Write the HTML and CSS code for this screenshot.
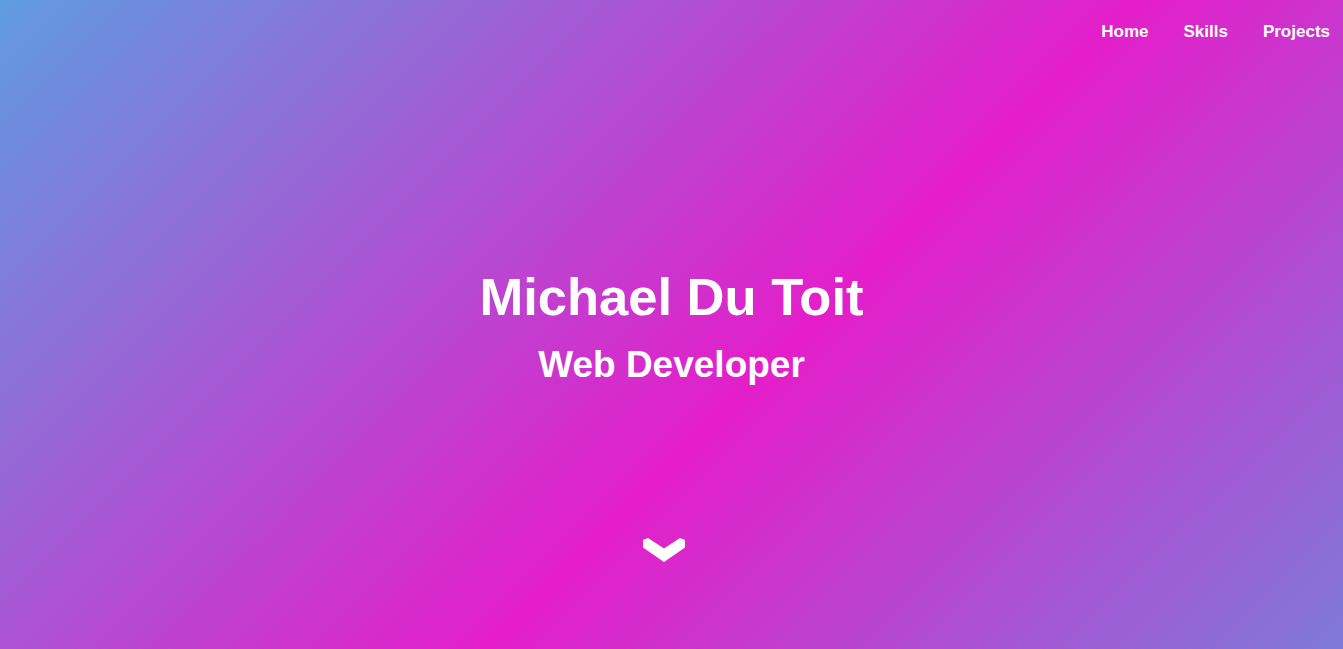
FILE: index.html
```html
<!DOCTYPE html>
<html lang="en">
<head>
<meta charset="utf-8">
<title>Michael Du Toit</title>
<link rel="stylesheet" href="styles.css">
</head>
<body>
<div class="hero">
  <header class="topbar">
    <nav class="nav">
      <a class="nav-link" href="#">Home</a>
      <a class="nav-link" href="#">Skills</a>
      <a class="nav-link" href="#">Projects</a>
    </nav>
  </header>
  <main class="intro">
    <h1 class="name">Michael Du Toit</h1>
    <h2 class="role">Web Developer</h2>
  </main>
  <div class="scroll">
    <svg class="chevron" width="42" height="25" viewBox="0 0 42 25" aria-hidden="true">
      <polygon points="0,2 5,0 21,10.5 37,0 42,2 42,9.5 21,24 0,9.5" fill="#fff"/>
    </svg>
  </div>
</div>
</body>
</html>
```
FILE: styles.css
```css
html, body {
  margin: 0;
  padding: 0;
}
body {
  font-family: "Liberation Sans", Arial, sans-serif;
  color: #fff;
}
.hero {
  height: 100vh;
  min-height: 649px;
  display: flex;
  flex-direction: column;
  background: linear-gradient(135deg, #5f9ce0 0%, #e41ec9 57%, #7e7ad9 100%);
  overflow: hidden;
}
.topbar {
  display: flex;
  justify-content: flex-end;
  padding: 22px 13px 18px 0;
}
.nav {
  display: flex;
  gap: 35px;
}
.nav-link {
  color: #fff;
  text-decoration: none;
  font-weight: bold;
  font-size: 17px;
  line-height: 20px;
}
.intro {
  display: flex;
  flex-direction: column;
  align-items: center;
  padding-top: 207px;
}
.name {
  margin: 0;
  font-size: 52.5px;
  line-height: 60px;
  font-weight: bold;
}
.role {
  margin: 16px 0 0;
  font-size: 37px;
  line-height: 43px;
  font-weight: bold;
}
.scroll {
  display: flex;
  justify-content: center;
  padding-top: 152px;
  padding-right: 15px;
}
.chevron {
  display: block;
}
```
